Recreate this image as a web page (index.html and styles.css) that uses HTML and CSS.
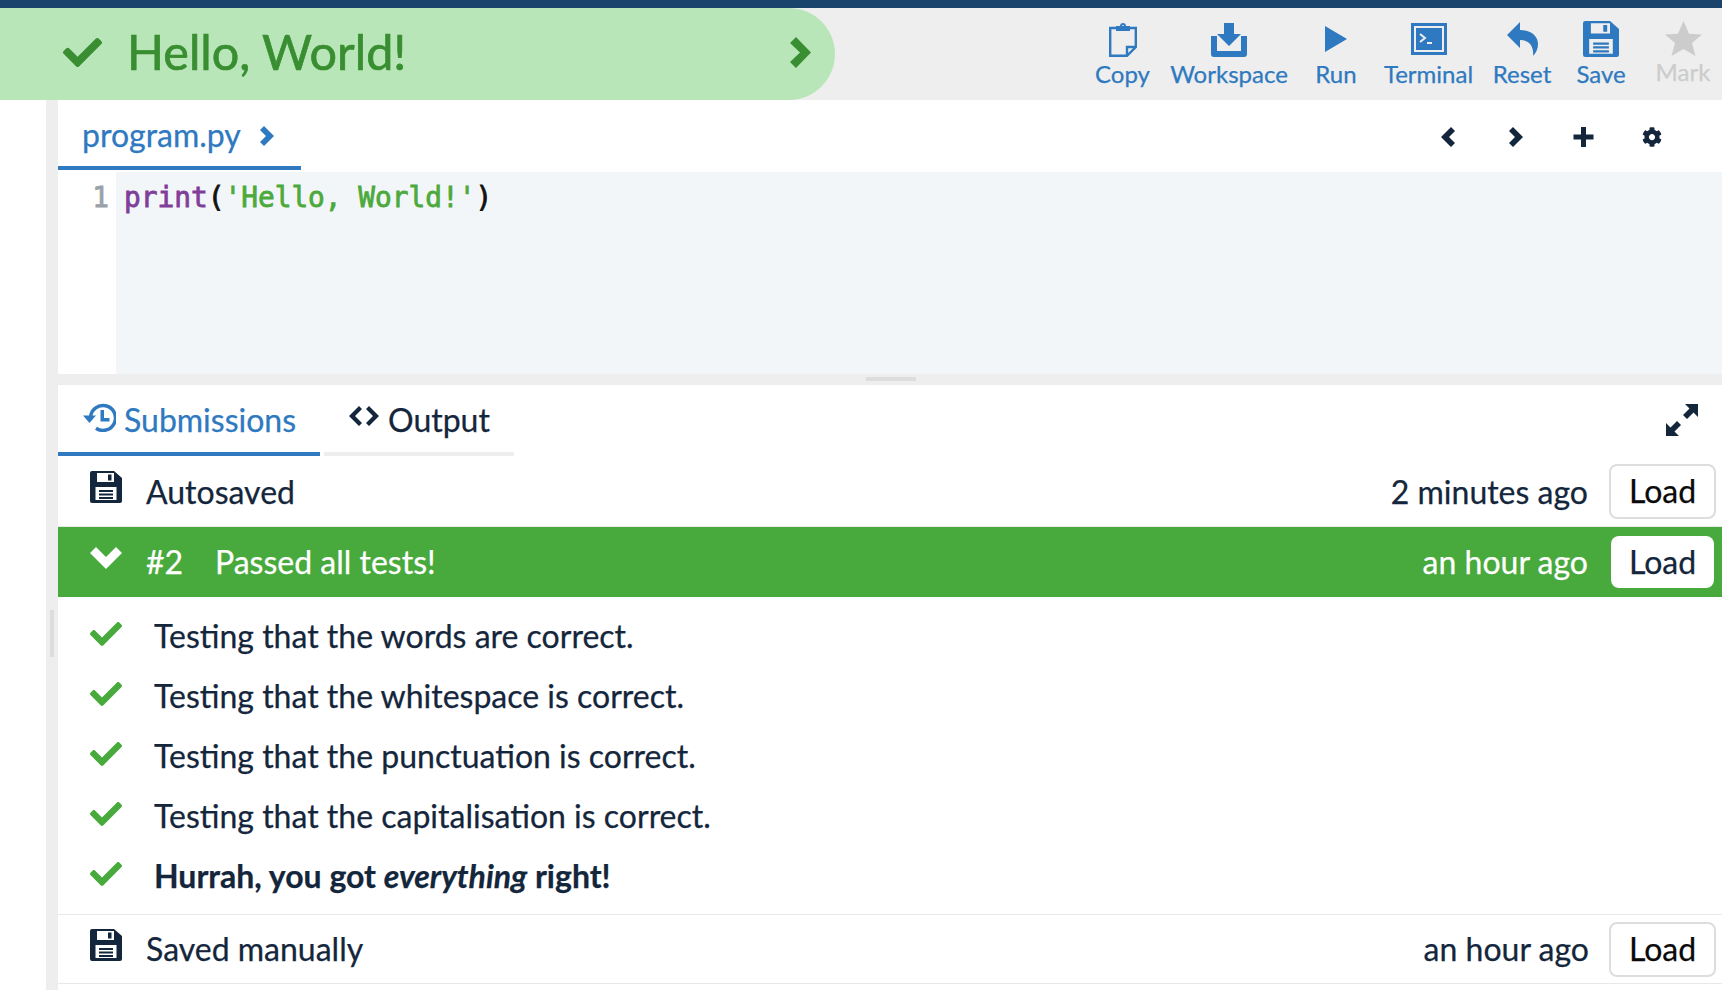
FILE: index.html
```html
<!DOCTYPE html>
<html lang="en">
<head>
<meta charset="utf-8">
<title>Hello, World!</title>
<link rel="stylesheet" href="styles.css">
</head>
<body>
<svg class="defs" width="0" height="0" aria-hidden="true">
  <symbol id="check" viewBox="0 0 512 512"><path d="M173.898 439.404l-166.4-166.4c-9.997-9.997-9.997-26.206 0-36.204l36.203-36.204c9.997-9.998 26.207-9.998 36.204 0L192 312.69 432.095 72.596c9.997-9.997 26.207-9.997 36.204 0l36.203 36.204c9.997 9.997 9.997 26.206 0 36.204l-294.4 294.401c-9.998 9.997-26.207 9.997-36.204-.001z"/></symbol>
  <symbol id="floppy" viewBox="0 0 32 32"><path fill-rule="evenodd" d="M2 0H24L32 7V30a2 2 0 0 1-2 2H2a2 2 0 0 1-2-2V2a2 2 0 0 1 2-2ZM7 2V11H24V2ZM18 3.500H21.500V9.500H18ZM5.500 16V29H26.500V16ZM9 19H23V21H9ZM9 22.500H23V24.500H9ZM9 26H23V28H9Z"/></symbol>
</svg>
<div class="topline"></div>
<header class="header">
  <div class="pill">
    <svg class="pill-check"><use href="#check"/></svg>
    <span class="pill-title">Hello, World!</span>
    <svg class="pill-chev" viewBox="0 0 21 31"><path d="M6 0 21 15.500 6 31 0 25 10 15.500 0 6Z"/></svg>
  </div>
  <nav class="toolbar">
    <a class="tool tool-copy">
      <svg class="ticon" viewBox="0 0 28 35"><path class="line" d="M7 6H1.200V33.800H18L26.800 25V6H21"/><path class="line" d="M26.800 25H18V33.800"/><path d="M7 4H11C11 0 17 0 17 4H21V9H7ZM13 4H15C15 2.500 13 2.500 13 4Z" fill-rule="evenodd"/></svg>
      <span>Copy</span>
    </a>
    <a class="tool tool-work">
      <svg class="ticon" viewBox="0 0 36 34"><path d="M13 0H23V11H30L18 23 6 11H13Z"/><path d="M0 13H6V28H30V13H36V31a3 3 0 0 1-3 3H3a3 3 0 0 1-3-3Z"/></svg>
      <span>Workspace</span>
    </a>
    <a class="tool tool-run">
      <svg class="ticon" viewBox="0 0 22 26"><path d="M0 0 22 13 0 26Z"/></svg>
      <span>Run</span>
    </a>
    <a class="tool tool-term">
      <svg class="ticon" viewBox="0 0 36 32"><path fill-rule="evenodd" d="M0 0H36V32H0ZM3 3V29H33V3Z"/><path d="M5 5H31V27H5Z"/><path class="cut" d="M9 11 14 15 9 19M16 20H21"/></svg>
      <span>Terminal</span>
    </a>
    <a class="tool tool-reset">
      <svg class="ticon" viewBox="0 0 31 34"><path d="M13 0V8C24 8 31 14 31 22 31 27 29 31 26 34 27 25 23 18 13 18V26L0 13Z"/></svg>
      <span>Reset</span>
    </a>
    <a class="tool tool-save">
      <svg class="ticon"><use href="#floppy"/></svg>
      <span>Save</span>
    </a>
    <a class="tool tool-mark">
      <svg class="ticon" viewBox="0 0 37 35"><path d="M18.500 0 24 12.800 37 13.400 27 22 30.500 35 18.500 28 6.500 35 10 22 0 13.400 13 12.800Z"/></svg>
      <span>Mark</span>
    </a>
  </nav>
</header>
<div class="app">
  <aside class="rail"><div class="rail-strip"><div class="rail-handle"></div></div></aside>
  <main class="main">
    <div class="filebar">
      <div class="filetab">
        <span>program.py</span>
        <svg class="file-chev" viewBox="0 0 14 20"><path d="M4 0 14 10 4 20 0 16 6 10 0 4Z"/></svg>
      </div>
      <div class="filetools">
        <svg class="ft ft-chev" viewBox="0 0 14 20"><path d="M10 0 0 10 10 20 14 16 8 10 14 4Z"/></svg>
        <svg class="ft ft-chev" viewBox="0 0 14 20"><path d="M4 0 14 10 4 20 0 16 6 10 0 4Z"/></svg>
        <svg class="ft ft-plus" viewBox="0 0 20 20"><path d="M7.500 0H12.500V7.500H20V12.500H12.500V20H7.500V12.500H0V7.500H7.500Z"/></svg>
        <svg class="ft ft-gear" viewBox="0 0 512 512"><path d="M487.400 315.700l-42.600-24.600c4.300-23.200 4.300-47 0-70.200l42.600-24.600c4.900-2.800 7.100-8.600 5.500-14-11.100-35.600-30-67.800-54.700-94.600-3.800-4.100-10-5.100-14.800-2.300L380.800 110c-17.900-15.400-38.500-27.300-60.800-35.100V25.800c0-5.600-3.900-10.500-9.400-11.700-36.700-8.200-74.300-7.800-109.200 0-5.500 1.200-9.400 6.100-9.400 11.700V75c-22.200 7.900-42.800 19.800-60.800 35.100L88.700 85.500c-4.900-2.800-11-1.900-14.800 2.300-24.700 26.700-43.600 58.900-54.700 94.600-1.700 5.400.6 11.200 5.500 14L67.300 221c-4.300 23.200-4.300 47 0 70.200l-42.600 24.600c-4.900 2.800-7.100 8.600-5.500 14 11.100 35.600 30 67.800 54.700 94.600 3.800 4.100 10 5.100 14.800 2.300l42.600-24.600c17.900 15.400 38.500 27.300 60.800 35.100v49.200c0 5.600 3.900 10.500 9.400 11.700 36.700 8.200 74.300 7.800 109.200 0 5.500-1.200 9.400-6.100 9.400-11.700v-49.200c22.200-7.900 42.800-19.800 60.800-35.100l42.600 24.600c4.900 2.800 11 1.900 14.800-2.300 24.700-26.700 43.600-58.900 54.700-94.600 1.500-5.500-.7-11.300-5.600-14.100zM256 336c-44.100 0-80-35.900-80-80s35.900-80 80-80 80 35.900 80 80-35.900 80-80 80z"/></svg>
      </div>
    </div>
    <div class="editor">
      <div class="gutter">1</div>
      <pre class="code"><span class="kw">print</span>(<span class="str">'Hello, World!'</span>)</pre>
    </div>
    <div class="divider"><div class="divider-handle"></div></div>
    <div class="tabbar">
      <div class="tab tab-active">
        <svg class="tab-icon" viewBox="0 0 33 29"><path class="hist" d="M7.500 14.500A12.500 12.500 0 1 1 13 25.300"/><path d="M0 12.500H13L6.500 20Z"/><path d="M17.500 7H21V15H26.500V18.500H17.500Z"/></svg>
        <span>Submissions</span>
      </div>
      <div class="tab tab-plain">
        <svg class="tab-icon code-icon" viewBox="0 0 30 20"><path d="M10 0 0 10 10 20 13 17 6 10 13 3ZM20 0 30 10 20 20 17 17 24 10 17 3Z"/></svg>
        <span>Output</span>
      </div>
      <svg class="expand" viewBox="0 0 32 32"><path d="M19 0H32V13L27.500 8.500 21 15 17 11 23.500 4.500ZM13 32H0V19L4.500 23.500 11 17 15 21 8.500 27.500Z"/></svg>
    </div>
    <section class="row row-auto">
      <svg class="row-icon"><use href="#floppy"/></svg>
      <span class="row-label">Autosaved</span>
      <span class="row-time">2 minutes ago</span>
      <button class="load">Load</button>
    </section>
    <section class="row row-pass">
      <svg class="row-icon" viewBox="0 0 32 22"><path d="M6 0 16 10 26 0 32 6 16 22 0 6Z"/></svg>
      <span class="row-label row-num">#2</span>
      <span class="row-label">Passed all tests!</span>
      <span class="row-time">an hour ago</span>
      <button class="load load-white">Load</button>
    </section>
    <ul class="checks">
      <li class="check"><svg class="check-icon"><use href="#check"/></svg><span>Testing that the words are correct.</span></li>
      <li class="check"><svg class="check-icon"><use href="#check"/></svg><span>Testing that the whitespace is correct.</span></li>
      <li class="check"><svg class="check-icon"><use href="#check"/></svg><span>Testing that the punctuation is correct.</span></li>
      <li class="check"><svg class="check-icon"><use href="#check"/></svg><span>Testing that the capitalisation is correct.</span></li>
      <li class="check"><svg class="check-icon"><use href="#check"/></svg><strong>Hurrah, you got <em>everything</em> right!</strong></li>
    </ul>
    <section class="row row-saved">
      <svg class="row-icon"><use href="#floppy"/></svg>
      <span class="row-label">Saved manually</span>
      <span class="row-time">an hour ago</span>
      <button class="load">Load</button>
    </section>
  </main>
</div>
</body>
</html>
```
FILE: styles.css
```css
* { box-sizing: border-box; }
html, body { margin: 0; height: 990px; overflow: hidden; }
body {
  background: #fff;
  color: #14263b;
  font-family: Lato, "Open Sans", sans-serif;
  font-size: 32px;
  font-feature-settings: "liga" 1;
  -webkit-font-smoothing: antialiased;
  -webkit-text-stroke: 0.25px currentColor;
}
svg { display: block; fill: currentColor; flex: none; }
.defs { position: absolute; }

.topline { height: 8px; background: #1a446c; }

.header {
  height: 92px;
  background: #eeeeee;
  display: flex;
  justify-content: space-between;
}
.pill {
  width: 835px;
  background: #b9e6b9;
  border-radius: 0 46px 46px 0 / 0 46px 46px 0;
  color: #388e30;
  display: flex;
  align-items: center;
  padding: 0 24px 0 63px;
}
.pill-check { width: 39px; height: 39px; margin-top: -4px; }
.pill-title {
  font-size: 48.500px;
  line-height: 58px;
  margin: -7px 0 0 25px;
  flex: 1;
  -webkit-text-stroke: 0.7px currentColor;
}
.pill-chev { width: 21px; height: 31px; margin-top: -4px; }

.toolbar { display: flex; color: #2e79bf; }
.tool {
  display: flex;
  flex-direction: column;
  align-items: center;
  font-size: 24px;
  height: 92px;
  position: relative;
  white-space: nowrap;
}
.tool span { position: absolute; top: 50px; line-height: 32px; }
.ticon { width: 36px; height: 36px; margin-top: 13px; }
.tool-copy { width: 69px; }
.tool-copy .ticon { width: 28px; height: 35px; margin-top: 14px; }
.tool-work { width: 144px; }
.tool-work .ticon { height: 34px; margin-top: 15px; }
.tool-run { width: 70px; }
.tool-run .ticon { width: 22px; height: 26px; margin-top: 18px; }
.tool-term { width: 115px; }
.tool-term .ticon { height: 32px; margin-top: 15px; }
.tool-reset { width: 72px; }
.tool-reset .ticon { width: 31px; height: 34px; margin-top: 14px; }
.tool-save { width: 86px; }
.tool-save .ticon { margin-top: 13px; }
.tool-mark { width: 78px; color: #cccccc; }
.tool-mark .ticon { width: 37px; height: 35px; margin-top: 13px; }
.tool-mark span { top: 48px; }
.line { fill: none; stroke: currentColor; stroke-width: 2.400; }
.cut { fill: none; stroke: #eeeeee; stroke-width: 2; }

.app { display: flex; height: 890px; }
.rail { width: 58px; display: flex; justify-content: flex-end; }
.rail-strip { width: 12px; background: #eeeeee; position: relative; }
.rail-handle {
  position: absolute;
  left: 4px;
  top: 510px;
  width: 4px;
  height: 47px;
  background: #dddddd;
}
.main { flex: 1; min-width: 0; }

.filebar { height: 72px; display: flex; justify-content: space-between; }
.filetab {
  width: 243px;
  height: 70px;
  border-bottom: 4px solid #2e79bf;
  color: #2e79bf;
  display: flex;
  align-items: center;
  padding: 2px 0 0 24px;
  font-size: 32px;
}
.file-chev { width: 14px; height: 20px; margin: 4px 0 0 19px; }
.filetools { display: flex; align-items: center; color: #14263b; padding: 2px 60px 0 0; }
.ft { height: 20px; margin-left: 54px; }
.ft-chev { width: 14px; }
.ft-plus { width: 21px; margin-left: 50px; }
.ft-gear { width: 20px; margin-left: 48px; }

.editor { height: 202px; display: flex; }
.gutter {
  width: 58px;
  font: 27.800px/52px "DejaVu Sans Mono", monospace;
  color: #9aa1a8;
  text-align: right;
  padding-right: 7px;
  -webkit-text-stroke: 0.8px currentColor;
}
.code {
  flex: 1;
  margin: 0;
  background: #f3f6f9;
  padding-left: 8px;
  font: 27.800px/52px "DejaVu Sans Mono", monospace;
  color: #111;
  -webkit-text-stroke: 0.8px currentColor;
}
.kw { color: #7f3f98; }
.str { color: #4caa3c; }

.divider { height: 11px; background: #eeeeee; position: relative; }
.divider-handle {
  position: absolute;
  left: 808px;
  top: 3px;
  width: 50px;
  height: 4px;
  background: #dddddd;
}

.tabbar { height: 71px; display: flex; position: relative; }
.tab {
  height: 71px;
  border-bottom: 4px solid #eeeeee;
  display: flex;
  align-items: center;
  padding-top: 2px;
}
.tab-active {
  width: 262px;
  border-bottom-color: #2e79bf;
  color: #2e79bf;
  padding-left: 25px;
  margin-right: 4px;
}
.tab-plain { width: 190px; padding-left: 25px; }
.tab-icon { width: 33px; height: 29px; margin-right: 8px; margin-top: -5px; }
.code-icon { width: 30px; height: 20px; margin-right: 9px; margin-top: -8px; }
.hist { fill: none; stroke: currentColor; stroke-width: 3.500; }
.expand { position: absolute; right: 24px; top: 19px; width: 32px; height: 32px; }

.row {
  height: 72px;
  display: flex;
  align-items: center;
  padding: 0 6px 0 32px;
  border-bottom: 1px solid #e8e8e8;
}
.row-auto { height: 71px; }
.row-icon { width: 32px; height: 32px; margin-right: 24px; margin-top: -9px; }
.row-num { width: 69px; }
.row-time { margin-left: auto; margin-right: 21px; }
.row-pass {
  height: 70px;
  background: #48a93c;
  color: #fff;
  border-bottom: 0;
  padding-right: 8px;
  line-height: 64px;
}
.row-pass .row-time { margin-right: 23px; }
.row-pass .row-icon { height: 22px; margin-top: -8px; }
.row-saved .row-time { margin-right: 20px; }
.load {
  width: 107px;
  height: 55px;
  border: 2px solid #dddddd;
  border-radius: 8px;
  background: #fff;
  color: #0a0a0a;
  font: 32px Lato, sans-serif;
  padding: 0 0 2px;
}
.load-white { width: 103px; height: 52px; border: 0; color: #14263b; }

.checks { list-style: none; margin: 0; padding: 8px 0 9px; border-bottom: 1px solid #e8e8e8; }
.check { height: 60px; display: flex; align-items: center; padding-left: 32px; }
.check-icon { width: 32px; height: 32px; margin-right: 32px; color: #48a93c; margin-top: -2px; }
.row-saved { height: 69px; line-height: 68px; }
```
